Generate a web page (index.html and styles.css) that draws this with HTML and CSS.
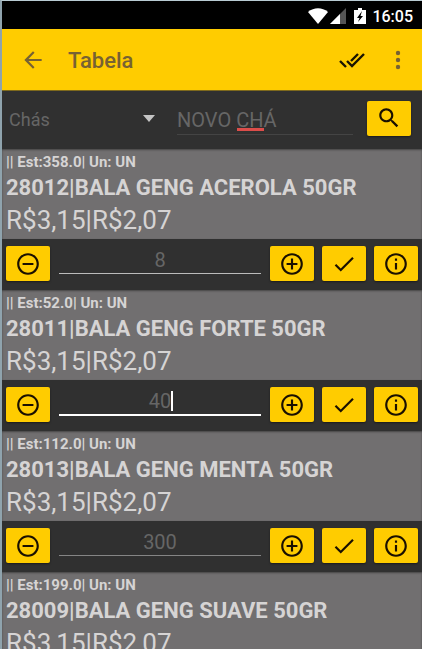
FILE: index.html
```
<!DOCTYPE html>
<html lang="pt-BR">
<head>
	<title>Tabela</title>
	<meta charset="UTF-8">
	<meta name="viewport" content="width=device-width, initial-scale=1">
	<link rel="stylesheet" href="styles.css">
</head>
<body>

<svg class="symbols" aria-hidden="true">
	<symbol id="minus" viewBox="0 0 24 24"><path d="M7 11v2h10v-2H7zm5-9C6.480 2 2 6.480 2 12s4.480 10 10 10 10-4.480 10-10S17.520 2 12 2zm0 18c-4.410 0-8-3.590-8-8s3.590-8 8-8 8 3.590 8 8-3.590 8-8 8z"/></symbol>
	<symbol id="plus" viewBox="0 0 24 24"><path d="M13 7h-2v4H7v2h4v4h2v-4h4v-2h-4V7zm-1-5C6.480 2 2 6.480 2 12s4.480 10 10 10 10-4.480 10-10S17.520 2 12 2zm0 18c-4.410 0-8-3.590-8-8s3.590-8 8-8 8 3.590 8 8-3.590 8-8 8z"/></symbol>
	<symbol id="check" viewBox="0 0 24 24"><path d="M9 16.170L4.830 12l-1.420 1.410L9 19 21 7l-1.410-1.410z"/></symbol>
	<symbol id="info" viewBox="0 0 24 24"><path d="M11 17h2v-6h-2v6zm1-15C6.480 2 2 6.480 2 12s4.480 10 10 10 10-4.480 10-10S17.520 2 12 2zm0 18c-4.410 0-8-3.590-8-8s3.590-8 8-8 8 3.590 8 8-3.590 8-8 8zM11 9h2V7h-2v2z"/></symbol>
</svg>

<div class="app">
	<div class="status">
		<svg class="wifi" viewBox="0 0 20 16"><path d="M0 4C6-1 14-1 20 4L10 16z"/></svg>
		<svg class="signal" viewBox="0 0 16 16"><path class="weak" d="M16 0v16H0z"/><path d="M10 6v10H0z"/></svg>
		<svg class="battery" viewBox="0 0 12 16"><path d="M4 0h4v2h4v14H0V2h4z"/><path class="bolt" d="M8 3L3 10h2.500L4 14l5-6H6.500z"/></svg>
		<span>16:05</span>
	</div>

	<header class="toolbar">
		<button class="tool" aria-label="Voltar"><svg class="icon" viewBox="0 0 24 24"><path d="M20 11H7.830l5.590-5.590L12 4l-8 8 8 8 1.410-1.410L7.830 13H20v-2z"/></svg></button>
		<h1>Tabela</h1>
		<button class="tool dark" aria-label="Confirmar todos"><svg class="done-all" viewBox="0 0 26 16"><path d="M1 9l6 6M8 9l5 5L25 2M12 9l7-7"/></svg></button>
		<button class="tool" aria-label="Mais"><svg class="more" viewBox="0 0 6 20"><circle cx="3" cy="3" r="2.200"/><circle cx="3" cy="10" r="2.200"/><circle cx="3" cy="17" r="2.200"/></svg></button>
	</header>

	<form class="filter">
		<div class="group">
			<select aria-label="Grupo"><option>Chás</option></select>
			<svg class="arrow" viewBox="0 0 12 7"><path d="M0 0h12L6 7z"/></svg>
		</div>
		<div class="search">
			<input type="text" aria-label="Buscar" value="NOVO CHÁ" spellcheck="false">
			<span class="typo"></span>
		</div>
		<button type="button" class="btn" aria-label="Pesquisar"><svg class="icon" viewBox="0 0 24 24"><path d="M15.500 14h-.79l-.28-.27C15.410 12.590 16 11.110 16 9.500 16 5.910 13.090 3 9.500 3S3 5.910 3 9.500 5.910 16 9.500 16c1.610 0 3.090-.59 4.230-1.570l.27.28v.79l5 4.990L20.490 19l-4.990-5zm-6 0C7.010 14 5 11.990 5 9.500S7.010 5 9.500 5 14 7.010 14 9.500 11.990 14 9.500 14z"/></svg></button>
	</form>

	<ul class="list">
		<li>
			<div class="product">
				<p class="stock">|| Est:358.0| Un: UN</p>
				<h2>28012|BALA GENG ACEROLA 50GR</h2>
				<p class="price">R$3,15|R$2,07</p>
			</div>
			<div class="controls">
				<button class="btn" aria-label="Menos"><svg class="icon"><use href="#minus"/></svg></button>
				<div class="qty"><input type="text" aria-label="Quantidade" value="8"></div>
				<button class="btn" aria-label="Mais"><svg class="icon"><use href="#plus"/></svg></button>
				<button class="btn" aria-label="Confirmar"><svg class="icon"><use href="#check"/></svg></button>
				<button class="btn" aria-label="Detalhes"><svg class="icon"><use href="#info"/></svg></button>
			</div>
		</li>
		<li>
			<div class="product">
				<p class="stock">|| Est:52.0| Un: UN</p>
				<h2>28011|BALA GENG FORTE 50GR</h2>
				<p class="price">R$3,15|R$2,07</p>
			</div>
			<div class="controls">
				<button class="btn" aria-label="Menos"><svg class="icon"><use href="#minus"/></svg></button>
				<div class="qty active"><input type="text" aria-label="Quantidade" value="40"><span class="caret"></span></div>
				<button class="btn" aria-label="Mais"><svg class="icon"><use href="#plus"/></svg></button>
				<button class="btn" aria-label="Confirmar"><svg class="icon"><use href="#check"/></svg></button>
				<button class="btn" aria-label="Detalhes"><svg class="icon"><use href="#info"/></svg></button>
			</div>
		</li>
		<li>
			<div class="product">
				<p class="stock">|| Est:112.0| Un: UN</p>
				<h2>28013|BALA GENG MENTA 50GR</h2>
				<p class="price">R$3,15|R$2,07</p>
			</div>
			<div class="controls">
				<button class="btn" aria-label="Menos"><svg class="icon"><use href="#minus"/></svg></button>
				<div class="qty dim"><input type="text" aria-label="Quantidade" value="300"></div>
				<button class="btn" aria-label="Mais"><svg class="icon"><use href="#plus"/></svg></button>
				<button class="btn" aria-label="Confirmar"><svg class="icon"><use href="#check"/></svg></button>
				<button class="btn" aria-label="Detalhes"><svg class="icon"><use href="#info"/></svg></button>
			</div>
		</li>
		<li>
			<div class="product">
				<p class="stock">|| Est:199.0| Un: UN</p>
				<h2>28009|BALA GENG SUAVE 50GR</h2>
				<p class="price">R$3,15|R$2,07</p>
			</div>
		</li>
	</ul>
</div>

</body>
</html>
```
FILE: styles.css
```
* { box-sizing:border-box; }
body
{
	margin:0;
	background:#303030;
	color:#d6d4d4;
	font-family:Roboto, "Liberation Sans", sans-serif;
}
h1, h2, p, ul { margin:0; padding:0; }
button, input, select { font-family:inherit; margin:0; border:0; border-radius:0; outline:none; }
svg { display:block; fill:currentColor; }
.symbols { position:absolute; width:0; height:0; }
.app
{
	display:flex;
	flex-direction:column;
	height:100vh;
	border-top:1px solid #b9cbd3;
	border-left:2px solid #8fa3ad;
	overflow:hidden;
}
.status
{
	display:flex;
	flex:none;
	align-items:center;
	justify-content:flex-end;
	height:28px;
	padding:2px 9px 0 0;
	background:#000;
	color:#fff;
	font-size:16px;
	font-weight:500;
}
.wifi { width:20px; height:16px; margin-right:2px; }
.signal { width:16px; height:16px; margin-right:8px; }
.weak { fill:#555; }
.battery { width:12px; height:16px; margin-right:6px; }
.bolt { fill:#000; }
.toolbar
{
	display:flex;
	flex:none;
	align-items:center;
	height:62px;
	padding:0 1px 0 8px;
	background:#fc0;
	color:#776233;
	border-bottom:1px solid #7f6a1c;
}
.toolbar h1
{
	flex:1;
	margin-left:12px;
	padding-top:2px;
	font-size:22px;
	font-weight:500;
	line-height:28px;
}
.tool
{
	display:flex;
	align-items:center;
	justify-content:center;
	width:46px;
	height:46px;
	padding:0;
	background:none;
	color:inherit;
}
.dark { color:#1a1400; }
.icon { width:26px; height:26px; }
.done-all { width:26px; height:16px; fill:none; stroke:currentColor; stroke-width:2.4; }
.more { width:6px; height:20px; }
.btn
{
	display:flex;
	flex:none;
	align-items:center;
	justify-content:center;
	width:44px;
	height:35px;
	padding:0;
	border-radius:2px;
	background:#fc0;
	color:#1a1000;
	box-shadow:0 1px 2px #1c1c1c;
}
.filter
{
	display:flex;
	flex:none;
	align-items:center;
	height:58px;
	padding:0 11px 4px 7px;
}
.group
{
	position:relative;
	flex:1;
}
.group select
{
	width:100%;
	height:32px;
	padding:2px 0 0;
	appearance:none;
	background:none;
	color:#666;
	font-size:18px;
}
.arrow
{
	position:absolute;
	right:22px;
	top:13px;
	width:12px;
	height:7px;
	color:#c4c4c4;
	pointer-events:none;
}
.search
{
	position:relative;
	width:176px;
	margin-right:14px;
}
.search input
{
	display:block;
	width:100%;
	height:34px;
	padding:4px 0 0;
	background:none;
	border-bottom:1px solid #444;
	color:#666;
	font-size:20px;
}
.typo
{
	position:absolute;
	left:60px;
	bottom:4px;
	width:27px;
	height:3px;
	background:#dc4d4a;
}
.list
{
	flex:1;
	overflow:hidden;
	list-style:none;
}
.product
{
	padding:4px 4px 3px;
	background:#716f70;
	box-shadow:inset 0 1px 2px #444;
}
.stock { font-size:15px; font-weight:bold; line-height:18px; }
.product h2 { font-size:22px; font-weight:bold; line-height:33px; }
.price { font-size:26px; line-height:32px; }
.controls
{
	display:flex;
	align-items:flex-start;
	gap:8px;
	padding:7px 4px 9px;
}
.qty
{
	position:relative;
	flex:1;
	margin:0 1px;
	border-bottom:1px solid #bbb;
}
.qty input
{
	display:block;
	width:100%;
	height:27px;
	padding:0;
	background:none;
	color:#666;
	font-size:20px;
	text-align:center;
}
.active { border-bottom:2px solid #fff; }
.dim { border-color:#858585; }
.caret
{
	position:absolute;
	left:50%;
	top:4px;
	width:2px;
	height:20px;
	margin-left:11px;
	background:#fff;
}
```
